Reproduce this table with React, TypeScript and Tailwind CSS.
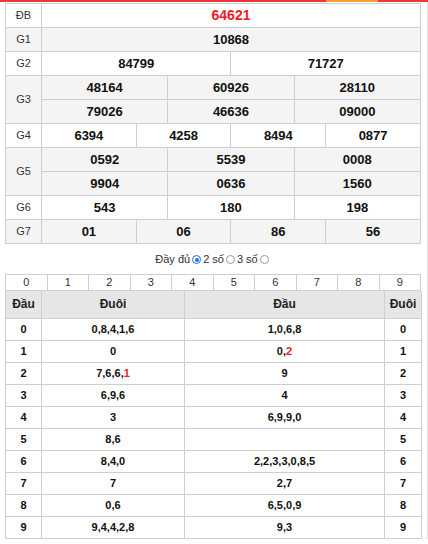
import React from "react";

type Prize = { label: string; rows: string[][]; red?: boolean };

const PRIZES: Prize[] = [
  { label: "ĐB", rows: [["64621"]], red: true },
  { label: "G1", rows: [["10868"]] },
  { label: "G2", rows: [["84799", "71727"]] },
  { label: "G3", rows: [["48164", "60926", "28110"], ["79026", "46636", "09000"]] },
  { label: "G4", rows: [["6394", "4258", "8494", "0877"]] },
  { label: "G5", rows: [["0592", "5539", "0008"], ["9904", "0636", "1560"]] },
  { label: "G6", rows: [["543", "180", "198"]] },
  { label: "G7", rows: [["01", "06", "86", "56"]] },
];

// [dau, duoi-list, dau-list, duoi], "*" marks the red digit
const LOTO: [string, string, string, string][] = [
  ["0", "0,8,4,1,6", "1,0,6,8", "0"],
  ["1", "0", "0,*2", "1"],
  ["2", "7,6,6,*1", "9", "2"],
  ["3", "6,9,6", "4", "3"],
  ["4", "3", "6,9,9,0", "4"],
  ["5", "8,6", "", "5"],
  ["6", "8,4,0", "2,2,3,3,0,8,5", "6"],
  ["7", "7", "2,7", "7"],
  ["8", "0,6", "6,5,0,9", "8"],
  ["9", "9,4,4,2,8", "9,3", "9"],
];

function Digits({ text }: { text: string }) {
  const i = text.indexOf("*");
  if (i < 0) return <>{text}</>;
  return (
    <>
      {text.slice(0, i)}
      <span className="text-[#ee1c25]">{text.slice(i + 1)}</span>
    </>
  );
}

function Radio({ on }: { on?: boolean }) {
  return on ? (
    <span className="mx-[2px] inline-flex h-[9px] w-[9px] items-center justify-center rounded-full border-[1.5px] border-[#1a73e8]">
      <span className="h-[4px] w-[4px] rounded-full bg-[#1a73e8]" />
    </span>
  ) : (
    <span className="mx-[2px] inline-block h-[9px] w-[9px] rounded-full border border-[#9a9a9a]" />
  );
}

const cell = "border border-[#cfcfcf]";

export default function App() {
  return (
    <div className="relative h-[544px] w-[428px] bg-white font-['Liberation_Sans',Arial,sans-serif] text-[#222]">
      <div className="flex h-[2px]">
        <div className="w-[326px] bg-[#f0353b]" />
        <div className="w-[52px] bg-[#f7a23c]" />
        <div className="flex-1 bg-[#f0353b]" />
      </div>
      <div className="border-r border-[#e2e2e2] pl-[5px] pr-[6px] pt-px">
        <table className="w-[416px] table-fixed border-collapse">
          <colgroup>
            <col className="w-[36px]" />
            {Array.from({ length: 12 }).map((_, i) => (
              <col key={i} />
            ))}
          </colgroup>
          <tbody>
            {PRIZES.map((p, pi) =>
              p.rows.map((row, ri) => (
                <tr
                  key={p.label + ri}
                  className={`h-[24px] ${pi % 2 ? "bg-[#f4f4f4]" : "bg-white"}`}
                >
                  {ri === 0 && (
                    <td
                      rowSpan={p.rows.length}
                      className={`${cell} text-center text-[11px] text-[#333]`}
                    >
                      {p.label}
                    </td>
                  )}
                  {row.map((n, ni) => (
                    <td
                      key={ni}
                      colSpan={12 / row.length}
                      className={`${cell} p-0 text-center font-bold ${
                        p.red ? "text-[14px] text-[#ee1c25]" : "text-[13px] text-[#111]"
                      }`}
                    >
                      {n}
                    </td>
                  ))}
                </tr>
              ))
            )}
          </tbody>
        </table>

        <div className="flex h-[30px] items-center justify-center pt-[1px] text-[11px] text-[#333]">
          Đầy đủ
          <Radio on />2 số
          <Radio />3 số
          <Radio />
        </div>

        <table className="w-[416px] table-fixed border-collapse">
          <tbody>
            <tr className="h-[16px] bg-white">
              {Array.from({ length: 10 }).map((_, i) => (
                <td key={i} className={`${cell} p-0 text-center text-[11px] leading-none text-[#333]`}>
                  {i}
                </td>
              ))}
            </tr>
          </tbody>
        </table>

        <table className="w-[416px] table-fixed border-collapse">
          <colgroup>
            <col className="w-[36px]" />
            <col className="w-[143px]" />
            <col className="w-[200px]" />
            <col className="w-[37px]" />
          </colgroup>
          <thead>
            <tr className="h-[27px] bg-[#e6e6e6] text-[12px] font-bold text-[#222]">
              <th className={`${cell} border-t-0`}>Đầu</th>
              <th className={`${cell} border-t-0`}>Đuôi</th>
              <th className={`${cell} border-t-0`}>Đầu</th>
              <th className={`${cell} border-t-0`}>Đuôi</th>
            </tr>
          </thead>
          <tbody>
            {LOTO.map(([a, b, c, d]) => (
              <tr key={a} className="h-[22px] text-[11px] font-bold text-[#111]">
                <td className={`${cell} text-center`}>{a}</td>
                <td className={`${cell} text-center`}>
                  <Digits text={b} />
                </td>
                <td className={`${cell} text-center`}>
                  <Digits text={c} />
                </td>
                <td className={`${cell} text-center`}>{d}</td>
              </tr>
            ))}
          </tbody>
        </table>
      </div>
    </div>
  );
}
